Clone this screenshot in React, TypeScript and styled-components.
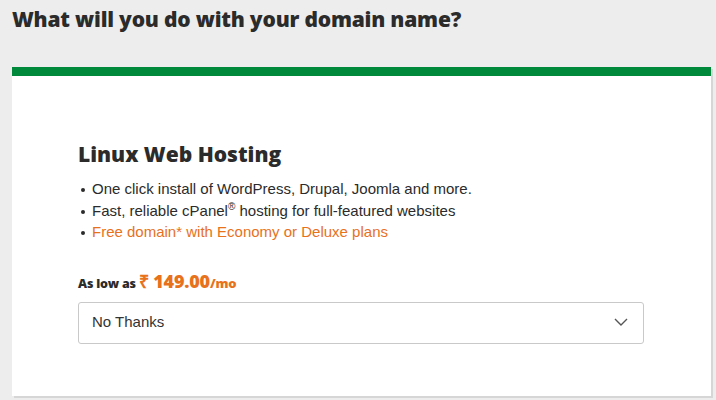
import styled, { createGlobalStyle } from 'styled-components';

const GlobalStyle = createGlobalStyle`
  html, body {
    margin: 0;
    padding: 0;
    background: #ededed;
  }
  body {
    font-family: "Liberation Sans", Arial, sans-serif;
    color: #2b2b2b;
  }
`;

const features = [
    { text: 'One click install of WordPress, Drupal, Joomla and more.' },
    { text: 'Fast, reliable cPanel', sup: '®', rest: ' hosting for full-featured websites' },
    { text: 'Free domain* with Economy or Deluxe plans', promo: true },
];

export default function App() {
    return (
        <>
            <GlobalStyle />
            <Page>
                <Title>What will you do with your domain name?</Title>
                <Card>
                    <PlanName>Linux Web Hosting</PlanName>
                    <FeatureList>
                        {features.map((f, i) => (
                            <Feature key={i} promo={f.promo}>
                                {f.text}
                                {f.sup && <Sup>{f.sup}</Sup>}
                                {f.rest}
                            </Feature>
                        ))}
                    </FeatureList>
                    <PriceLine>
                        As low as <Price>₹ 149.00</Price><Per>/mo</Per>
                    </PriceLine>
                    <Select>
                        <span>No Thanks</span>
                        <svg width="14" height="8" viewBox="0 0 14 8" fill="none">
                            <path d="M1 1l6 6 6-6" stroke="#555" strokeWidth="1.4" />
                        </svg>
                    </Select>
                </Card>
            </Page>
        </>
    );
}

const Page = styled.div`
  padding: 6px 5px 0 12px;
  height: 400px;
  box-sizing: border-box;
  overflow: hidden;
`;

const Title = styled.h1`
  margin: 0 0 35px 0;
  font-family: "Open Sans", sans-serif;
  font-weight: 800;
  font-size: 21px;
  line-height: 26px;
  letter-spacing: -0.2px;
  color: #2b2b2b;
`;

const Card = styled.div`
  background: #fff;
  border-top: 9px solid #00893a;
  box-shadow: 2px 2px 0 #d6d6d6;
  padding: 65px 67px 52px 66px;
`;

const PlanName = styled.h2`
  margin: 0 0 10px 0;
  font-family: "Open Sans", sans-serif;
  font-weight: 800;
  font-size: 21px;
  line-height: 27px;
  letter-spacing: 0;
  color: #2b2b2b;
`;

const FeatureList = styled.ul`
  margin: 0 0 26px 0;
  padding: 0 0 0 14px;
  list-style: none;
`;

const Feature = styled.li<{ promo?: boolean }>`
  position: relative;
  font-size: 15px;
  line-height: 21.5px;
  color: ${(p) => (p.promo ? '#e8711c' : '#2b2b2b')};
  &::before {
    content: '';
    position: absolute;
    left: -11px;
    top: 10px;
    width: 4px;
    height: 4px;
    border-radius: 50%;
    background: #2b2b2b;
  }
`;

const Sup = styled.sup`
  font-size: 10px;
  line-height: 0;
`;

const PriceLine = styled.div`
  font-family: "Open Sans", sans-serif;
  font-weight: 800;
  font-size: 12.5px;
  color: #2b2b2b;
  margin-bottom: 9px;
  letter-spacing: -0.2px;
`;

const Price = styled.span`
  font-size: 18px;
  color: #e8711c;
`;

const Per = styled.span`
  font-size: 13px;
  color: #e8711c;
`;

const Select = styled.div`
  display: flex;
  align-items: center;
  justify-content: space-between;
  height: 42px;
  box-sizing: border-box;
  border: 1px solid #c9c9c9;
  border-radius: 3px;
  padding: 0 15px 2px 13px;
  font-size: 15px;
  color: #333;
`;
